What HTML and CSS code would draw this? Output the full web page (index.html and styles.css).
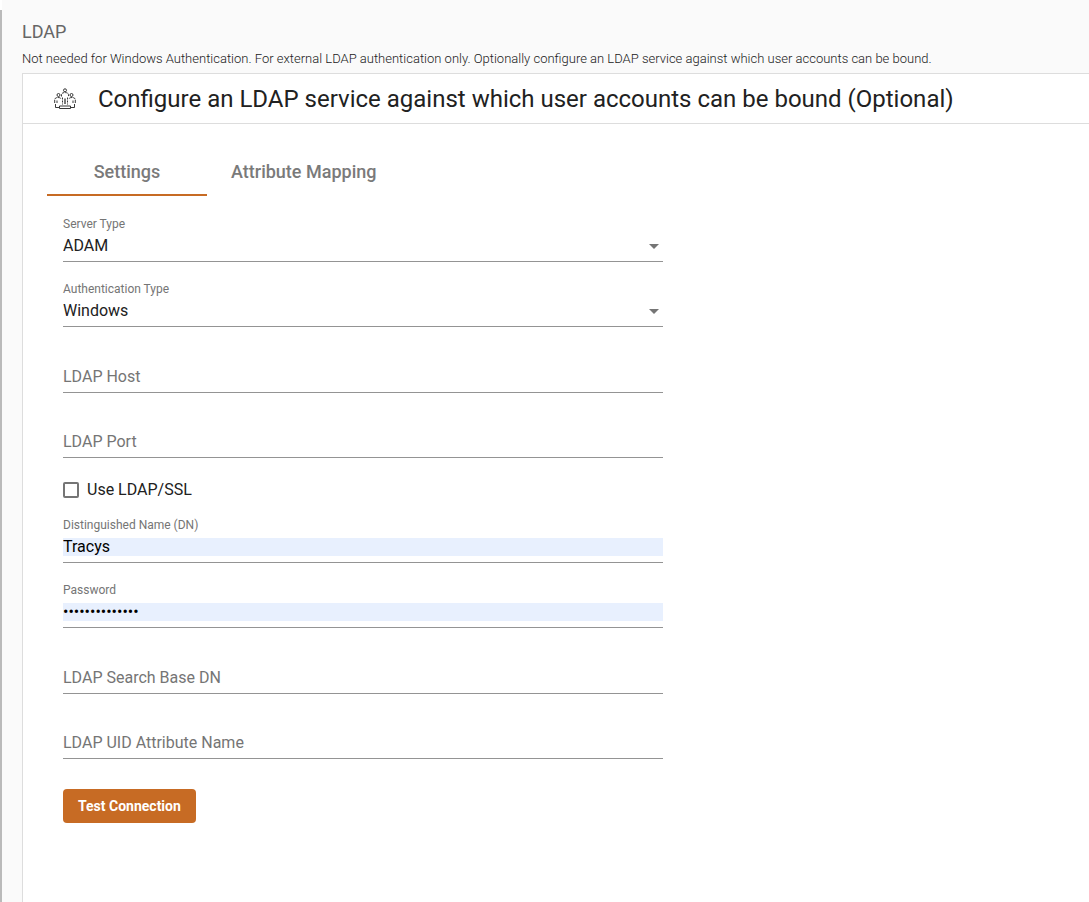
FILE: index.html
```html
<!DOCTYPE html>
<html lang="en">
<head>
<meta charset="utf-8">
<title>LDAP</title>
<link rel="stylesheet" href="styles.css">
</head>
<body>
<div class="rail"></div>
<main class="page">
  <h1 class="page-title">LDAP</h1>
  <p class="page-note">Not needed for Windows Authentication. For external LDAP authentication only. Optionally configure an LDAP service against which user accounts can be bound.</p>
  <section class="panel">
    <header class="panel-head">
      <svg class="group-icon" viewBox="0 0 22 22" fill="none" stroke="#222" stroke-width=".9" aria-hidden="true">
        <circle cx="11" cy="2.300" r="1.500"/>
        <path d="M7.500 8.500V6.800Q7.500 4.600 11 4.600t3.500 2.200V8.500" stroke-dasharray="2.500 .7"/>
        <circle cx="4.500" cy="7" r="1.500"/>
        <circle cx="17.500" cy="7" r="1.500"/>
        <path d="M.7 15v-3Q.7 9.500 4 9.500q2.500 0 3.200 1.500M21.300 15v-3q0-2.500-3.300-2.500-2.500 0-3.200 1.500" stroke-dasharray="3 .6"/>
        <path d="M8.500 9.500v7M13.500 9.500v7" stroke-dasharray="2 1"/>
        <path d="M11 10.500v5.500" stroke-width="1.200"/>
        <path d="M3 12.500v2.500M19 12.500v2.500M1.500 16v3.500H5M20.500 16v3.500H17"/>
        <path d="M5.500 18h11v2.500h-11z"/>
      </svg>
      <h2 class="panel-title">Configure an LDAP service against which user accounts can be bound (Optional)</h2>
    </header>
    <div class="tabs" role="tablist">
      <button class="tab active" role="tab" aria-selected="true">Settings</button>
      <button class="tab" role="tab" aria-selected="false">Attribute Mapping</button>
    </div>
    <form class="form">
      <div class="fields">
        <div class="pair">
          <div class="field">
            <label for="server">Server Type</label>
            <select id="server"><option>ADAM</option></select>
            <svg class="arrow" viewBox="0 0 10 5" aria-hidden="true"><path d="M0 0h10L5 5z" fill="#757575"/></svg>
          </div>
          <div class="field">
            <label for="auth">Authentication Type</label>
            <select id="auth"><option>Windows</option></select>
            <svg class="arrow" viewBox="0 0 10 5" aria-hidden="true"><path d="M0 0h10L5 5z" fill="#757575"/></svg>
          </div>
        </div>
        <div class="pair">
          <div class="field empty"><label for="host">LDAP Host</label><input id="host" type="text"></div>
          <div class="field empty"><label for="port">LDAP Port</label><input id="port" type="text"></div>
        </div>
      </div>
      <div class="check-row">
        <input class="check" id="ssl" type="checkbox"><label for="ssl">Use LDAP/SSL</label>
      </div>
      <div class="fields">
        <div class="pair">
          <div class="field filled"><label for="dn">Distinguished Name (DN)</label><input id="dn" type="text" value="Tracys"></div>
          <div class="field filled"><label for="pw">Password</label><input id="pw" type="password" value="abcdefghijklmn"></div>
        </div>
        <div class="pair">
          <div class="field empty"><label for="base">LDAP Search Base DN</label><input id="base" type="text"></div>
          <div class="field empty"><label for="uid">LDAP UID Attribute Name</label><input id="uid" type="text"></div>
        </div>
      </div>
      <button class="submit" type="button">Test Connection</button>
    </form>
  </section>
</main>
</body>
</html>
```
FILE: styles.css
```css
* { box-sizing: border-box; }
body {
  margin: 0;
  min-height: 100vh;
  display: flex;
  font-family: Roboto, sans-serif;
  color: #212121;
  background: #fff;
}
button, input, select { font: inherit; color: inherit; }
.rail { flex: none; width: 2px; margin-top: 10px; background: #bababa; }
.page {
  flex: 1;
  min-width: 0;
  display: flex;
  flex-direction: column;
  padding: 20px 0 0 20px;
  background: #fafafa;
}
.page-title { margin: 0; font-size: 18px; font-weight: 400; line-height: 24px; color: #666; }
.page-note { margin: 4px 0; font-size: 13px; font-weight: 300; line-height: 21px; }
.panel {
  flex: 1;
  border: 1px solid #ddd;
  border-width: 1px 0 0 1px;
  background: #fff;
}
.panel-head {
  display: flex;
  align-items: center;
  gap: 22px;
  padding: 9px 31px 8px;
  border-bottom: 1px solid #ddd;
}
.group-icon { flex: none; width: 22px; height: 22px; }
.panel-title { margin: 0; font-size: 24px; font-weight: 400; line-height: 32px; }
.tabs { display: flex; padding: 24px 24px 0; }
.tab {
  min-width: 160px;
  height: 48px;
  padding: 0 24px;
  border: 0;
  border-bottom: 2px solid transparent;
  background: none;
  font-size: 18px;
  font-weight: 500;
  color: #7a7a7a;
}
.tab.active { border-bottom-color: #c76b24; }
.form { max-width: 680px; padding: 20px 40px 40px; font-size: 16px; }
.fields { display: grid; gap: 20px; }
.pair { display: grid; gap: 19px; }
.field {
  display: grid;
  grid-template-rows: 16px 18px;
  row-gap: 5px;
  padding-bottom: 6px;
  border-bottom: 1px solid #949494;
}
.field label { grid-area: 1 / 1; font-size: 12px; line-height: 16px; color: #757575; }
.field input, .field select {
  grid-area: 2 / 1;
  width: 100%;
  height: 18px;
  padding: 0;
  border: 0;
  outline: 0;
  background: transparent;
  line-height: 18px;
  appearance: none;
}
.field.empty label { grid-area: 2 / 1; font-size: 16px; line-height: 18px; }
.field.filled input { background: #e8f0fe; color: #000; }
.arrow {
  grid-area: 2 / 1;
  justify-self: end;
  align-self: center;
  width: 10px;
  height: 5px;
  margin-right: 4px;
  pointer-events: none;
}
.check-row { display: flex; align-items: center; gap: 8px; margin: 22px 0 17px; line-height: 20px; }
.check {
  appearance: none;
  width: 16px;
  height: 16px;
  margin: 0;
  border: 2px solid #757575;
  border-radius: 2px;
}
.submit {
  height: 34px;
  margin-top: 30px;
  padding: 0 15px;
  border: 0;
  border-radius: 4px;
  background: #c76b24;
  color: #fff;
  font-size: 14px;
  font-weight: 700;
}
```
